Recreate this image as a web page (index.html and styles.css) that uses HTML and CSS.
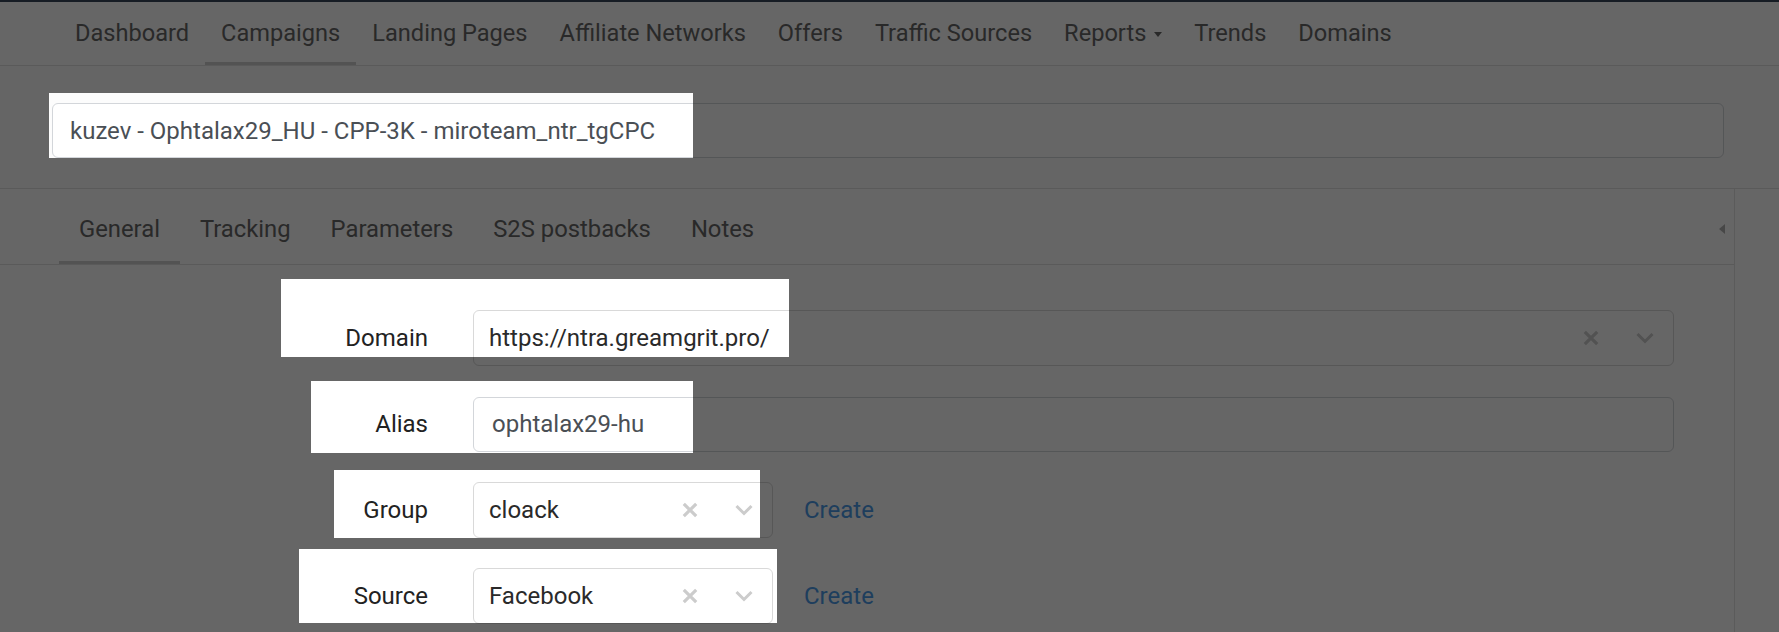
FILE: index.html
```html
<!DOCTYPE html>
<html lang="en">
<head>
<meta charset="utf-8">
<title>Campaign</title>
<link rel="stylesheet" href="styles.css">
</head>
<body>
<div class="page">
  <nav class="topnav">
    <a class="nav-item">Dashboard</a>
    <a class="nav-item active">Campaigns</a>
    <a class="nav-item">Landing Pages</a>
    <a class="nav-item">Affiliate Networks</a>
    <a class="nav-item">Offers</a>
    <a class="nav-item">Traffic Sources</a>
    <a class="nav-item">Reports<span class="caret"></span></a>
    <a class="nav-item">Trends</a>
    <a class="nav-item">Domains</a>
  </nav>

  <section class="header">
    <input class="title-input" type="text" value="kuzev - Ophtalax29_HU - CPP-3K - miroteam_ntr_tgCPC" readonly>
  </section>

  <main class="panel">
    <div class="tabs">
      <a class="tab active">General</a>
      <a class="tab">Tracking</a>
      <a class="tab">Parameters</a>
      <a class="tab">S2S postbacks</a>
      <a class="tab">Notes</a>
      <span class="toggle"></span>
    </div>

    <div class="form">
      <div class="row">
        <label class="label">Domain</label>
        <div class="select wide">
          <span class="value">https://ntra.greamgrit.pro/</span>
          <svg class="clear" viewBox="0 0 16 16" width="16" height="16"><path d="M1.8 1.8L14.2 14.2M14.2 1.8L1.8 14.2"/></svg>
          <svg class="chev" viewBox="0 0 20 12" width="20" height="12"><path d="M2.5 2L10 9.5L17.5 2"/></svg>
        </div>
      </div>
      <div class="row">
        <label class="label">Alias</label>
        <input class="text-input wide" type="text" value="ophtalax29-hu" readonly>
      </div>
      <div class="row">
        <label class="label">Group</label>
        <div class="select short">
          <span class="value">cloack</span>
          <svg class="clear" viewBox="0 0 16 16" width="16" height="16"><path d="M1.8 1.8L14.2 14.2M14.2 1.8L1.8 14.2"/></svg>
          <svg class="chev" viewBox="0 0 20 12" width="20" height="12"><path d="M2.5 2L10 9.5L17.5 2"/></svg>
        </div>
        <a class="create">Create</a>
      </div>
      <div class="row">
        <label class="label">Source</label>
        <div class="select short">
          <span class="value">Facebook</span>
          <svg class="clear" viewBox="0 0 16 16" width="16" height="16"><path d="M1.8 1.8L14.2 14.2M14.2 1.8L1.8 14.2"/></svg>
          <svg class="chev" viewBox="0 0 20 12" width="20" height="12"><path d="M2.5 2L10 9.5L17.5 2"/></svg>
        </div>
        <a class="create">Create</a>
      </div>
    </div>
  </main>

  <svg class="overlay" viewBox="0 0 1779 632" width="1779" height="632" aria-hidden="true">
    <path fill-rule="evenodd" d="M0 0H1779V632H0Z M49 93H693V158H49Z M281 279H789V357H281Z M311 381H693V453H311Z M334 470H760V538H334Z M299 549H777V623H299Z"/>
  </svg>
</div>
</body>
</html>
```

FILE: styles.css
```css
* {
  box-sizing: border-box;
}

html, body {
  margin: 0;
  padding: 0;
  background: #ffffff;
}

body {
  font-family: Roboto, "Noto Sans", "Liberation Sans", sans-serif;
  font-size: 24px;
  color: #333333;
  width: 1779px;
  height: 632px;
  overflow: hidden;
}

.page {
  position: relative;
  width: 1779px;
  height: 632px;
  overflow: hidden;
}

/* top navigation */
.topnav {
  display: flex;
  border-top: 2px solid #37465a;
  border-bottom: 1px solid #e2e2e2;
  padding-left: 59px;
  font-size: 23.6px;
}

.nav-item {
  display: flex;
  align-items: center;
  height: 63px;
  padding: 2px 16px 0;
  border-bottom: 3px solid transparent;
  color: #686868;
  text-decoration: none;
  white-space: nowrap;
}

.nav-item.active {
  border-bottom-color: #d0d0d0;
}

.caret {
  display: inline-block;
  width: 0;
  height: 0;
  margin-left: 8px;
  margin-top: 2px;
  border-top: 5px solid #686868;
  border-left: 4px solid transparent;
  border-right: 4px solid transparent;
}

/* campaign name header */
.header {
  padding: 37px 55px 30px 52px;
  border-bottom: 1px solid #e2e2e2;
  background: #fcfcfc;
}

.title-input {
  display: block;
  width: 100%;
  height: 55px;
  padding: 0 17px;
  border: 1px solid #d3d6da;
  border-radius: 6px;
  background: #ffffff;
  font: inherit;
  color: #4a4f55;
  outline: none;
}

/* tab panel */
.panel {
  width: 1735px;
  height: 443px;
  border-right: 1px solid #e4e4e4;
}

.tabs {
  display: flex;
  padding-left: 59px;
  border-bottom: 1px solid #e2e2e2;
  font-size: 23.8px;
}

.tab {
  display: flex;
  align-items: center;
  height: 75px;
  padding: 7px 20px 0;
  border-bottom: 3px solid transparent;
  color: #686868;
  text-decoration: none;
  white-space: nowrap;
}

.tab.active {
  border-bottom-color: #d0d0d0;
}

.toggle {
  align-self: center;
  margin-left: auto;
  margin-right: 9px;
  margin-top: 5px;
  width: 0;
  height: 0;
  border-right: 6px solid #b2b2b2;
  border-top: 5.5px solid transparent;
  border-bottom: 5.5px solid transparent;
}

/* form */
.form {
  display: flex;
  flex-direction: column;
  gap: 30px;
  padding: 45px 60px 0 0;
}

.row {
  display: flex;
  align-items: center;
  height: 56px;
}

.label {
  width: 428px;
  text-align: right;
  color: #222222;
}

.wide {
  flex: 1;
}

.short {
  width: 300px;
}

.text-input {
  height: 55px;
  margin-left: 45px;
  padding: 0 18px;
  border: 1px solid #d3d6da;
  border-radius: 6px;
  background: #ffffff;
  font: inherit;
  color: #4a4f55;
  outline: none;
}

.select {
  display: flex;
  align-items: center;
  height: 56px;
  margin-left: 45px;
  padding-left: 15px;
  border: 1px solid #d9d9d9;
  border-radius: 6px;
  background: #ffffff;
  color: #2a2a2a;
}

.select .value {
  flex: 1;
  white-space: nowrap;
  overflow: hidden;
}

.clear {
  flex: none;
  margin-right: 36px;
  fill: none;
  stroke: #cccccc;
  stroke-width: 3.2;
}

.chev {
  flex: none;
  margin-right: 18px;
  fill: none;
  stroke: #cccccc;
  stroke-width: 3;
}

.create {
  margin-left: 31px;
  color: #4d9be8;
  text-decoration: none;
}

/* dimming backdrop with spotlight holes */
.overlay {
  position: absolute;
  top: 0;
  left: 0;
  pointer-events: none;
  fill: rgba(0, 0, 0, 0.6);
}
```
